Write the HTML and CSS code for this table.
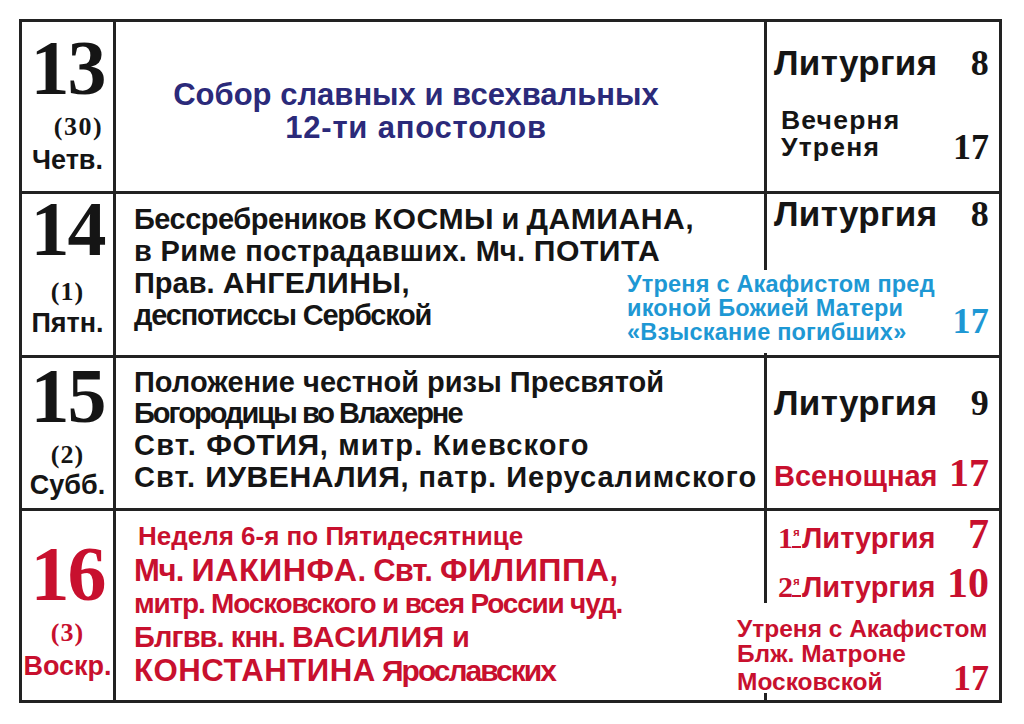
FILE: index.html
```html
<!DOCTYPE html>
<html lang="ru">
<head>
<meta charset="utf-8">
<title>Расписание богослужений</title>
<link rel="stylesheet" href="styles.css">
</head>
<body>
<div class="sheet">
  <div class="row r1">
    <div class="date">
      <div class="num">13</div>
      <div class="old old-wide">(30)</div>
      <div class="wd">Четв.</div>
    </div>
    <div class="feast feast-blue">
      <div class="fl">Собор славных и всехвальных</div>
      <div class="fl fl-b2">12-ти апостолов</div>
    </div>
    <div class="svc">
      <div class="sv sv-lit"><span class="sn">Литургия</span><span class="st">8</span></div>
      <div class="sv sv-two"><span class="sn sn-two"><span class="ln">Вечерня</span><span class="ln">Утреня</span></span><span class="st st-two">17</span></div>
    </div>
  </div>

  <div class="row r2">
    <div class="date">
      <div class="num">14</div>
      <div class="old">(1)</div>
      <div class="wd">Пятн.</div>
    </div>
    <div class="feast feast-4">
      <div class="fl ls-a">Бессребреников <span class="cap">КОСМЫ</span> и <span class="cap">ДАМИАНА</span>,</div>
      <div class="fl ls-b">в Риме пострадавших. Мч. <span class="cap">ПОТИТА</span></div>
      <div class="fl">Прав. <span class="cap">АНГЕЛИНЫ</span>,</div>
      <div class="fl ls-c">деспотиссы Сербской</div>
    </div>
    <div class="svc">
      <div class="sv sv-lit"><span class="sn">Литургия</span><span class="st">8</span></div>
    </div>
    <div class="note note-cyan">
      <div class="note-text">
        <div class="nl">Утреня с Акафистом пред</div>
        <div class="nl">иконой Божией Матери</div>
        <div class="nl">«Взыскание погибших»</div>
      </div>
      <span class="note-time">17</span>
    </div>
  </div>

  <div class="row r3">
    <div class="date">
      <div class="num">15</div>
      <div class="old">(2)</div>
      <div class="wd">Субб.</div>
    </div>
    <div class="feast feast-3">
      <div class="fl">Положение честной ризы Пресвятой</div>
      <div class="fl ls-d">Богородицы во Влахерне</div>
      <div class="fl ls-e">Свт. <span class="cap">ФОТИЯ</span>, митр. Киевского</div>
      <div class="fl ls-f">Свт. <span class="cap">ИУВЕНАЛИЯ</span>, патр. Иерусалимского</div>
    </div>
    <div class="svc">
      <div class="sv sv-lit"><span class="sn">Литургия</span><span class="st">9</span></div>
      <div class="sv sv-vig"><span class="sn">Всенощная</span><span class="st">17</span></div>
    </div>
  </div>

  <div class="row r4">
    <div class="date date-red">
      <div class="num">16</div>
      <div class="old">(3)</div>
      <div class="wd">Воскр.</div>
    </div>
    <div class="feast feast-5">
      <div class="fl fl-s">Неделя 6-я по Пятидесятнице</div>
      <div class="fl fl-l ls-g">Мч. <span class="cap">ИАКИНФА</span>. Свт. <span class="cap">ФИЛИППА</span>,</div>
      <div class="fl fl-m ls-c">митр. Московского и всея России чуд.</div>
      <div class="fl fl-n ls-h">Блгвв. кнн. <span class="cap">ВАСИЛИЯ</span> и</div>
      <div class="fl fl-k ls-i"><span class="cap">КОНСТАНТИНА</span> Ярославских</div>
    </div>
    <div class="svc">
      <div class="sv sv-l1"><span class="sn"><span class="ordn">1</span><span class="ord">я</span>Литургия</span><span class="st">7</span></div>
      <div class="sv sv-l2"><span class="sn"><span class="ordn">2</span><span class="ord">я</span>Литургия</span><span class="st">10</span></div>
    </div>
    <div class="note note-red">
      <div class="nl">Утреня с Акафистом</div>
      <div class="nl">Блж. Матроне</div>
      <div class="nl nl-last"><span>Московской</span><span class="note-time">17</span></div>
    </div>
  </div>
</div>
</body>
</html>
```

FILE: styles.css
```css
html, body {
  margin: 0;
  padding: 0;
  background: #ffffff;
}

.sheet {
  margin: 19px 0 0 19px;
  width: 983px;
  height: 684px;
  box-sizing: border-box;
  border: 3px solid #222222;
  display: flex;
  flex-direction: column;
  font-family: "Liberation Sans", Arial, sans-serif;
  font-weight: 700;
  color: #151515;
}

.row {
  position: relative;
  display: grid;
  grid-template-columns: 94px 651px 1fr;
  box-sizing: border-box;
  border-bottom: 3px solid #222222;
}

.r1 { height: 172px; }
.r2 { height: 164px; }
.r3 { height: 153px; }
.r4 { height: 189px; border-bottom: none; }

.date,
.feast {
  border-right: 3px solid #222222;
}

/* ---------- date column ---------- */
.date {
  display: flex;
  flex-direction: column;
  align-items: center;
  white-space: nowrap;
}

.date-red { color: #c8102e; }

.r1 .date { padding-top: 11px; }
.r2 .date { padding-top: 0; }
.r3 .date { padding-top: 3px; }
.r4 .date { padding-top: 28px; }

.num {
  font-family: "Liberation Serif", "Times New Roman", serif;
  font-weight: 700;
  font-size: 78px;
  line-height: 70px;
  letter-spacing: -2px;
}

.old {
  font-family: "Liberation Serif", "Times New Roman", serif;
  font-weight: 700;
  font-size: 26px;
  line-height: 30px;
  margin-top: 9px;
  letter-spacing: 1px;
}

.r2 .old { margin-top: 13px; }
.r2 .wd { margin-top: 1px; }
.r3 .wd { margin-top: 0; }

.old-wide {
  padding-left: 22px;
  letter-spacing: 1.5px;
}

.wd {
  font-size: 27px;
  line-height: 30px;
  margin-top: 3px;
}

/* ---------- feast column ---------- */
.feast {
  white-space: nowrap;
  padding-left: 18px;
}

.fl {
  display: block;
  width: max-content;
}

.cap {
  font-size: 1.04em;
  letter-spacing: 0.5px;
}

.ls-a { letter-spacing: -0.5px; }
.ls-b { letter-spacing: 0.35px; }
.ls-c { letter-spacing: -1.2px; }
.ls-d { letter-spacing: -2px; }
.ls-e { letter-spacing: 1.2px; }
.ls-f { letter-spacing: 1px; }
.ls-g { letter-spacing: -0.8px; }
.ls-h { letter-spacing: -0.9px; }
.ls-i { letter-spacing: -2px; }

.feast-blue {
  color: #2b2a7a;
  text-align: center;
  padding: 56px 48px 0 0;
  font-size: 31px;
  line-height: 33px;
}

.feast-blue .fl { margin: 0 auto; }
.fl-b2 { letter-spacing: 0.8px; }

.feast-4 {
  padding-top: 9px;
  font-size: 29px;
  line-height: 32px;
}

.feast-3 {
  padding-top: 9px;
  font-size: 29px;
  line-height: 31px;
}

.feast-5 {
  color: #c8102e;
  padding-top: 7px;
  line-height: 33px;
}

.fl-s { font-size: 26px; line-height: 36px; padding-left: 4px; }
.fl-l { font-size: 31px; }
.fl-m { font-size: 28px; }
.fl-n { font-size: 29px; }
.fl-k { font-size: 30px; }

/* ---------- services column ---------- */
.svc {
  display: flex;
  flex-direction: column;
  padding: 0 10px 0 7px;
  white-space: nowrap;
}

.sv {
  display: flex;
  justify-content: space-between;
  align-items: baseline;
}

.sn { display: block; }

.st {
  font-family: "Liberation Serif", "Times New Roman", serif;
  font-weight: 700;
}

.sv-lit {
  font-size: 35px;
  line-height: 40px;
  letter-spacing: 0.3px;
}

.sv-lit .st { font-size: 36px; }

.r1 .svc { padding-top: 21px; }
.r2 .svc { padding-top: 0; }
.r3 .svc { padding-top: 25px; }
.r4 .svc { padding-top: 3px; }

.sv-two {
  align-items: flex-end;
  margin-top: 24px;
  font-size: 26.5px;
  line-height: 27px;
}

.sn-two {
  display: flex;
  flex-direction: column;
  padding-left: 7px;
  letter-spacing: 1.2px;
}

.st-two {
  font-size: 36px;
  line-height: 27px;
  letter-spacing: 0;
}

.sv-vig {
  color: #c8102e;
  margin-top: 30px;
  font-size: 29px;
  line-height: 40px;
}

.sv-vig .st { font-size: 40px; }

.sv-l1,
.sv-l2 {
  color: #c8102e;
  font-size: 29px;
  line-height: 40px;
  padding-left: 4px;
}

.sv-l2 { margin-top: 5px; }

.sv-l1 .st { font-size: 42px; }
.sv-l2 .st { font-size: 42px; }

.ordn {
  font-family: "Liberation Serif", "Times New Roman", serif;
  font-size: 30px;
  letter-spacing: -1px;
}

.ord {
  display: inline-block;
  overflow: hidden;
  width: 9px;
  height: 20px;
  font-size: 11px;
  line-height: 12px;
  text-align: center;
  border-bottom: 2px solid currentColor;
  margin-right: 1px;
}

/* ---------- overlay notes ---------- */
.note {
  position: absolute;
  right: 0;
  background: #ffffff;
  white-space: nowrap;
  padding: 0 10px 0 7px;
  box-sizing: border-box;
}

.note-cyan {
  color: #1e98d4;
  left: 598px;
  top: 76px;
  height: 83px;
  padding-top: 2px;
  font-size: 23.5px;
  line-height: 24px;
  letter-spacing: 0.2px;
  display: flex;
  justify-content: space-between;
  align-items: flex-end;
}

.note-text {
  align-self: flex-start;
}

.note-red {
  color: #c8102e;
  left: 708px;
  top: 92px;
  height: 90px;
  padding-top: 14px;
  font-size: 24.5px;
  line-height: 24.5px;
}

.nl { display: block; }

.nl-last {
  display: flex;
  justify-content: space-between;
  align-items: baseline;
}

.note-time {
  font-family: "Liberation Serif", "Times New Roman", serif;
  font-weight: 700;
  font-size: 36px;
  line-height: 24px;
}

.note-cyan .note-time {
  line-height: 36px;
  margin-bottom: 14px;
}
```
